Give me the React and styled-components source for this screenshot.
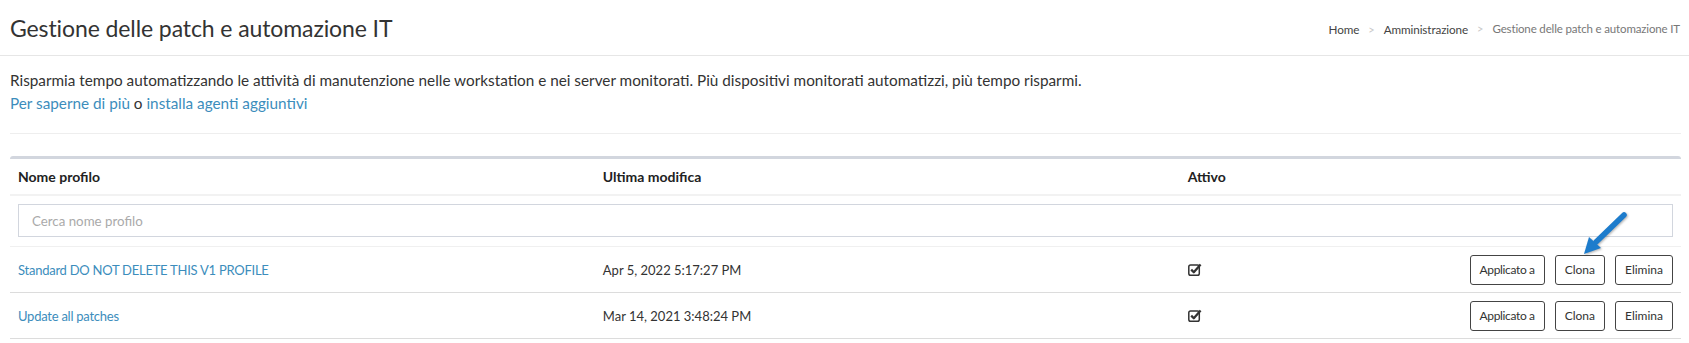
import React from 'react';
import styled, {createGlobalStyle} from 'styled-components';

const GlobalStyle = createGlobalStyle`
  html, body {
    margin: 0;
    padding: 0;
    background: #fff;
  }
  body {
    font-family: Lato, "Liberation Sans", sans-serif;
    color: #333;
  }
  * { box-sizing: border-box; }
`;

const Page = styled.div`
  position: relative;
  width: 1689px;
  min-height: 343px;
  background: #fff;
`;

const Header = styled.div`
  height: 56px;
  display: flex;
  align-items: center;
  justify-content: space-between;
  padding: 0 9px 0 10px;
  border-bottom: 1px solid #e6e6e6;
`;

const Title = styled.h1`
  margin: 0;
  font-size: 23px;
  font-weight: 400;
  color: #333;
  letter-spacing: -0.1px;
`;

const Crumbs = styled.ol`
  display: flex;
  align-items: center;
  margin: 2px 0 0;
  padding: 0;
  list-style: none;
  font-size: 12px;
`;

const Crumb = styled.li`
  color: ${({active}) => active ? '#777' : '#444'};
  font-size: ${({active}) => active ? '11.5px' : '11.7px'};
  letter-spacing: ${({active}) => active ? '-0.15px' : '-0.1px'};
  &:not(:first-child)::before {
    content: '>';
    color: #c8c8c8;
    padding: 0 9px;
    font-size: 11px;
    letter-spacing: 0;
  }
`;

const Content = styled.div`
  padding: 13px 8px 0 10px;
`;

const Intro = styled.p`
  margin: 0;
  font-size: 15.3px;
  line-height: 23px;
  color: #333;
`;

const Link = styled.a`
  color: #3c8dbc;
  text-decoration: none;
  cursor: pointer;
`;

const NameLink = styled(Link)`
  letter-spacing: -0.25px;
`;

const Divider = styled.hr`
  margin: 18px 0 22px;
  border: 0;
  border-top: 1px solid #eee;
`;

const Box = styled.div`
  border-top: 3px solid #d2d6de;
  border-radius: 3px 3px 0 0;
`;

const Table = styled.table`
  width: 100%;
  border-collapse: collapse;
  table-layout: fixed;
  font-size: 13px;
`;

const HeadCell = styled.th`
  text-align: left;
  height: 36px;
  padding: 0 8px;
  font-size: 14px;
  font-weight: 700;
  color: #222;
  border-bottom: 2px solid #f2f2f2;
`;

const FilterCell = styled.td`
  padding: 8px 8px 9px;
  border-bottom: 1px solid #f0f0f0;
`;

const Search = styled.input`
  display: block;
  width: 100%;
  height: 33px;
  border: 1px solid #d2d6de;
  padding: 0 13px;
  font-family: inherit;
  font-size: 13.3px;
  color: #555;
  outline: none;
  &::placeholder { color: #aaa; }
`;

const Row = styled.tr`
  border-bottom: 1px solid #dcdcdc;
`;

const Cell = styled.td`
  height: 46px;
  padding: 0 8px;
  color: #333;
  text-align: ${({right}) => right ? 'right' : 'left'};
`;

const Actions = styled.div`
  display: flex;
  justify-content: flex-end;
  gap: 10px;
`;

const Button = styled.button`
  height: 30px;
  padding: 0 9px;
  background: #fff;
  border: 1px solid #444;
  border-radius: 3px;
  font-family: inherit;
  font-size: 12px;
  letter-spacing: ${({tight}) => tight ? '-0.35px' : '0'};
  color: #333;
  cursor: pointer;
`;

const Pointer = styled.svg`
  position: absolute;
  left: 1576px;
  top: 210px;
  filter: drop-shadow(1px 1px 1px rgba(0, 0, 0, 0.3));
`;

const CheckIcon = () => (
  <svg width="14" height="13" viewBox="0 0 14 13" style={{display: 'block'}}>
    <rect x="0.8" y="2" width="10.5" height="10.2" rx="1.8" fill="none" stroke="#333" strokeWidth="1.5"/>
    <path d="M3.2 6.6 L5.8 9.2 L12.6 1.6" fill="none" stroke="#333" strokeWidth="2.3" strokeLinejoin="round"/>
  </svg>
);

const profiles = [
  {name: 'Standard DO NOT DELETE THIS V1 PROFILE', modified: 'Apr 5, 2022 5:17:27 PM'},
  {name: 'Update all patches', modified: 'Mar 14, 2021 3:48:24 PM'},
];

const App = () => (
  <Page>
    <GlobalStyle/>
    <Header>
      <Title>Gestione delle patch e automazione IT</Title>
      <Crumbs>
        <Crumb>Home</Crumb>
        <Crumb>Amministrazione</Crumb>
        <Crumb active>Gestione delle patch e automazione IT</Crumb>
      </Crumbs>
    </Header>
    <Content>
      <Intro>
        Risparmia tempo automatizzando le attività di manutenzione nelle workstation e nei server monitorati. Più dispositivi monitorati automatizzi, più tempo risparmi.
        <br/>
        <Link>Per saperne di più</Link> o <Link>installa agenti aggiuntivi</Link>
      </Intro>
      <Divider/>
      <Box>
        <Table>
          <colgroup>
            <col style={{width: '35%'}}/>
            <col style={{width: '35%'}}/>
            <col style={{width: '10%'}}/>
            <col/>
          </colgroup>
          <thead>
            <tr>
              <HeadCell>Nome profilo</HeadCell>
              <HeadCell>Ultima modifica</HeadCell>
              <HeadCell>Attivo</HeadCell>
              <HeadCell/>
            </tr>
          </thead>
          <tbody>
            <tr>
              <FilterCell colSpan={4}>
                <Search placeholder="Cerca nome profilo"/>
              </FilterCell>
            </tr>
            {profiles.map(p => (
              <Row key={p.name}>
                <Cell><NameLink>{p.name}</NameLink></Cell>
                <Cell>{p.modified}</Cell>
                <Cell><CheckIcon/></Cell>
                <Cell right>
                  <Actions>
                    <Button tight>Applicato a</Button>
                    <Button>Clona</Button>
                    <Button>Elimina</Button>
                  </Actions>
                </Cell>
              </Row>
            ))}
          </tbody>
        </Table>
      </Box>
    </Content>
    <Pointer width="56" height="50" viewBox="0 0 56 50">
      <line x1="48" y1="5" x2="20" y2="32" stroke="#1d7ccc" strokeWidth="5.5" strokeLinecap="round"/>
      <polygon points="8,44 13,27 25,38" fill="#1d7ccc"/>
    </Pointer>
  </Page>
);

export default App;
